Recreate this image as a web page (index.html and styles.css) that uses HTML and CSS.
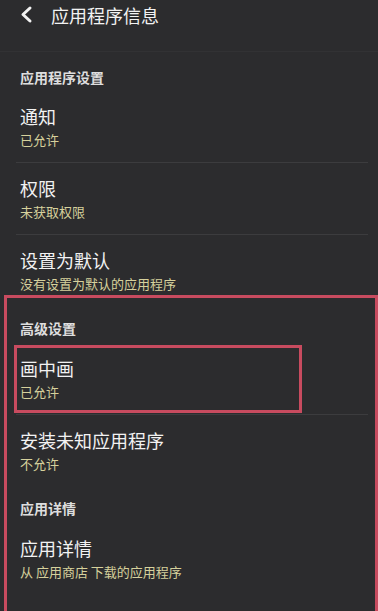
FILE: index.html
```html
<!DOCTYPE html>
<html lang="zh-CN">
<head>
  <meta charset="UTF-8">
  <title>应用程序信息</title>
  <link rel="stylesheet" href="styles.css">
</head>
<body>
<div class="page">

  <div class="appbar">
    <svg class="back" width="14" height="20" viewBox="0 0 14 20">
      <path d="M10 3 L3 9.5 L10 16" fill="none" stroke="#f2f2f2" stroke-width="3" stroke-linecap="round" stroke-linejoin="round"/>
    </svg>
    <span class="title">应用程序信息</span>
  </div>

  <div class="section first">应用程序设置</div>
  <div class="item">
    <div class="item-title">通知</div>
    <div class="item-sub">已允许</div>
  </div>
  <div class="item">
    <div class="item-title">权限</div>
    <div class="item-sub">未获取权限</div>
  </div>
  <div class="item last">
    <div class="item-title">设置为默认</div>
    <div class="item-sub">没有设置为默认的应用程序</div>
  </div>

  <div class="section">高级设置</div>
  <div class="item">
    <div class="item-title">画中画</div>
    <div class="item-sub">已允许</div>
  </div>
  <div class="item last">
    <div class="item-title">安装未知应用程序</div>
    <div class="item-sub">不允许</div>
  </div>

  <div class="section">应用详情</div>
  <div class="item last">
    <div class="item-title">应用详情</div>
    <div class="item-sub">从 应用商店 下载的应用程序</div>
  </div>

  <!-- annotation frames -->
  <div class="mark mark-outer"></div>
  <div class="mark mark-inner"></div>

</div>
</body>
</html>
```

FILE: styles.css
```css
html, body {
  margin: 0;
  padding: 0;
  background: #2c2c2e;
}
body {
  font-family: "Noto Sans CJK SC", "Noto Sans", sans-serif;
  color: #f0f0f0;
  overflow: hidden;
}
.page {
  position: relative;
  width: 378px;
  height: 611px;
  overflow: hidden;
}
.appbar {
  height: 52px;
  display: flex;
  align-items: flex-start;
  padding-left: 20px;
  border-bottom: 1px solid #323234;
  box-sizing: border-box;
}
.back {
  margin-top: 5px;
}
.title {
  margin-left: 17px;
  font-size: 18px;
  line-height: 30px;
  color: #f2f2f2;
}
.section {
  padding: 12px 20px 6px;
  font-size: 14px;
  line-height: 18px;
  font-weight: bold;
  color: #dedede;
}
.section.first {
  padding-top: 16px;
  padding-bottom: 5px;
}
.item {
  padding: 14px 20px 0;
  height: 72px;
  box-sizing: border-box;
  position: relative;
}
.item::after {
  content: "";
  position: absolute;
  left: 16px;
  right: 10px;
  bottom: 0;
  height: 1px;
  background: #3c3c3e;
}
.item.last::after {
  display: none;
}
.item-title {
  font-size: 18px;
  line-height: 22px;
  color: #f2f2f2;
}
.item-sub {
  margin-top: 4px;
  font-size: 13px;
  line-height: 18px;
  color: #d6d19c;
}
.mark {
  position: absolute;
  border: 3px solid #c84b5f;
  box-sizing: border-box;
}
.mark-outer {
  left: 4px;
  top: 295px;
  right: 0;
  bottom: -20px;
}
.mark-inner {
  left: 14px;
  top: 345px;
  width: 288px;
  height: 68px;
}
```
